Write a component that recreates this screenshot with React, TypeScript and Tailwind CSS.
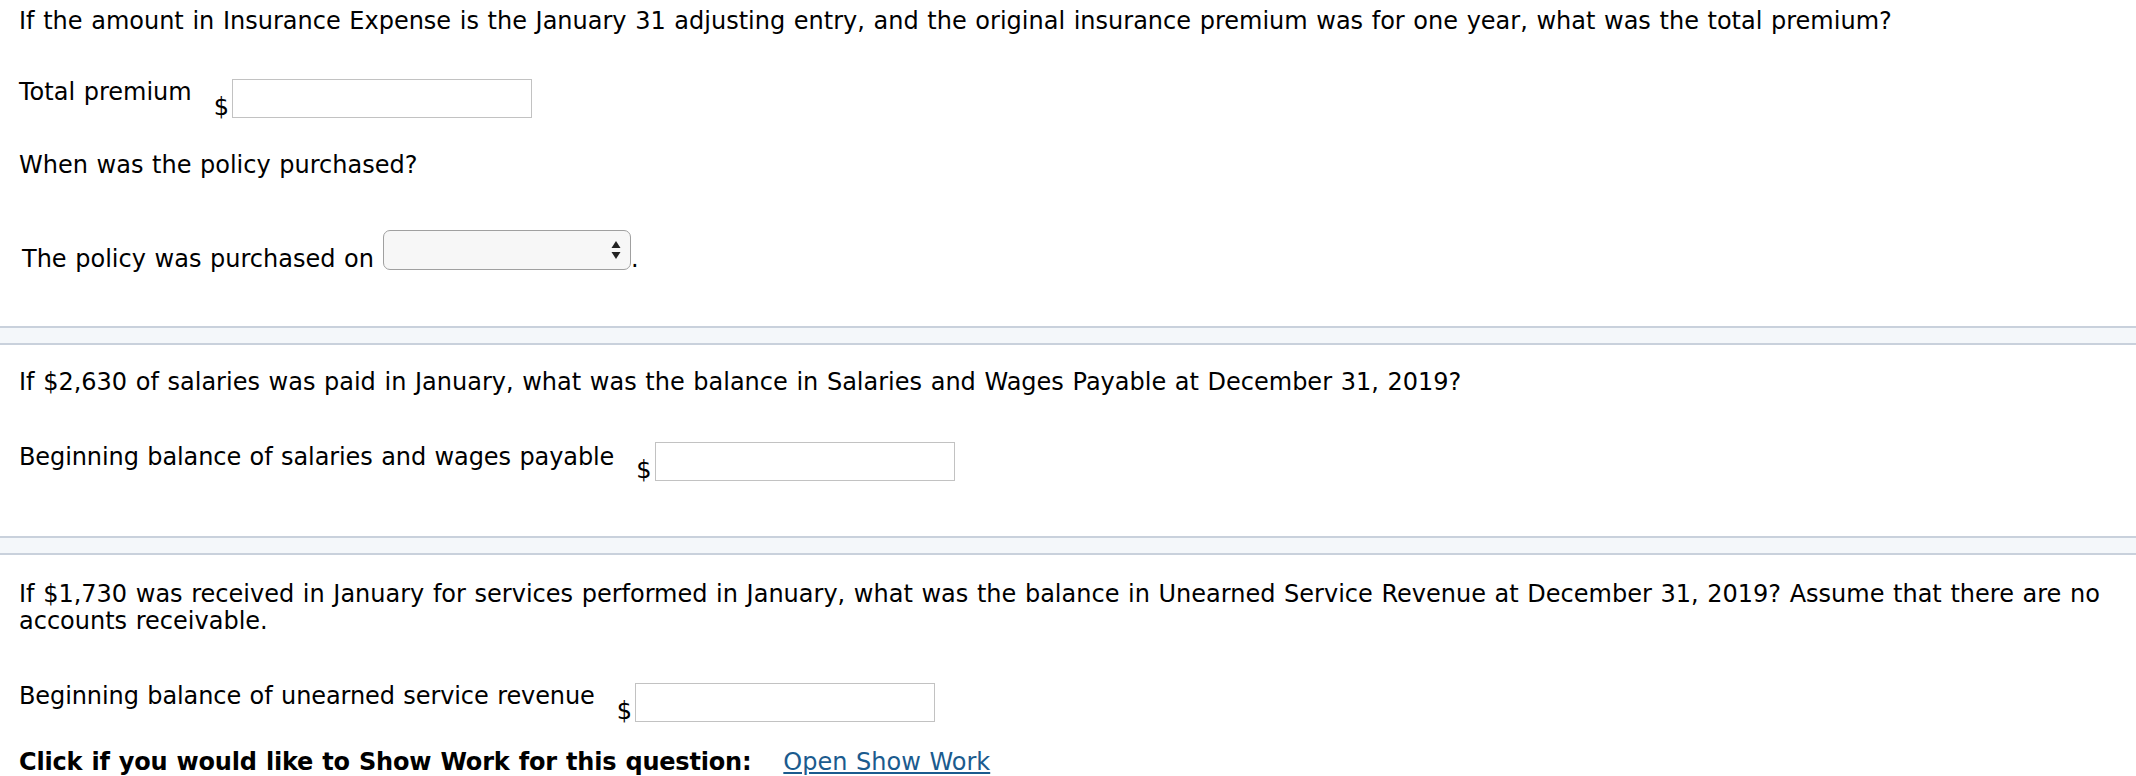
import React from 'react';

const DollarInput: React.FC = () => (
  <div className="ml-[22px] flex items-end">
    <span className="leading-[22px]">$</span>
    <div className="ml-[3px] h-[39px] w-[300px] border border-[#c2c2c2] bg-white" />
  </div>
);

const Separator: React.FC<{ className?: string }> = ({ className }) => (
  <div className={'h-[19px] border-y-2 border-[#c9d1dc] bg-[#f4f7fa] ' + (className || '')} />
);

const SelectBox: React.FC = () => (
  <div className="ml-[9px] flex h-[40px] w-[248px] items-center justify-end rounded-[7px] border border-[#a0a0a0] bg-[#f7f7f7] pr-[9px]">
    <svg width="10" height="20" viewBox="0 0 10 20">
      <polygon points="5,1 9.5,8 0.5,8" fill="#222" />
      <polygon points="0.5,12 9.5,12 5,19" fill="#222" />
    </svg>
  </div>
);

export default function App() {
  return (
    <div className="min-h-screen bg-white pt-2 font-['DejaVu_Sans',Verdana,sans-serif] text-[24px] leading-[27px] text-black [word-spacing:1px]">
      {/* Question 1 */}
      <div className="pl-[19px] pr-4">
        <p>
          If the amount in Insurance Expense is the January 31 adjusting entry, and the original insurance premium was
          for one year, what was the total premium?
        </p>
        <div className="mt-[44px] flex items-start">
          <span>Total premium</span>
          <DollarInput />
        </div>
        <p className="mt-[34px]">When was the policy purchased?</p>
        <div className="mt-[51px] flex items-end pl-[3px]">
          <span className="leading-[22px]">The policy was purchased on</span>
          <SelectBox />
          <span className="leading-[22px]">.</span>
        </div>
      </div>

      <Separator className="mt-[56px]" />

      {/* Question 2 */}
      <div className="pl-[19px] pr-4">
        <p className="mt-[24px]">
          If $2,630 of salaries was paid in January, what was the balance in Salaries and Wages Payable at December 31,
          2019?
        </p>
        <div className="mt-[46px] flex items-start">
          <span className="mt-[2px] tracking-[-0.1px]">Beginning balance of salaries and wages payable</span>
          <DollarInput />
        </div>
      </div>

      <Separator className="mt-[55px]" />

      {/* Question 3 */}
      <div className="pl-[19px] pr-4">
        <p className="mt-[26px]">
          If $1,730 was received in January for services performed in January, what was the balance in Unearned Service
          Revenue at December 31, 2019? Assume that there are no
          <br />
          accounts receivable.
        </p>
        <div className="mt-[48px] flex items-start">
          <span className="tracking-[-0.1px]">Beginning balance of unearned service revenue</span>
          <DollarInput />
        </div>
        <div className="mt-[27px] flex">
          <span className="font-bold tracking-[-0.2px]">Click if you would like to Show Work for this question:</span>
          <a href="#" className="ml-[32px] text-[#1b5b8e] underline underline-offset-2">
            Open Show Work
          </a>
        </div>
      </div>
    </div>
  );
}
